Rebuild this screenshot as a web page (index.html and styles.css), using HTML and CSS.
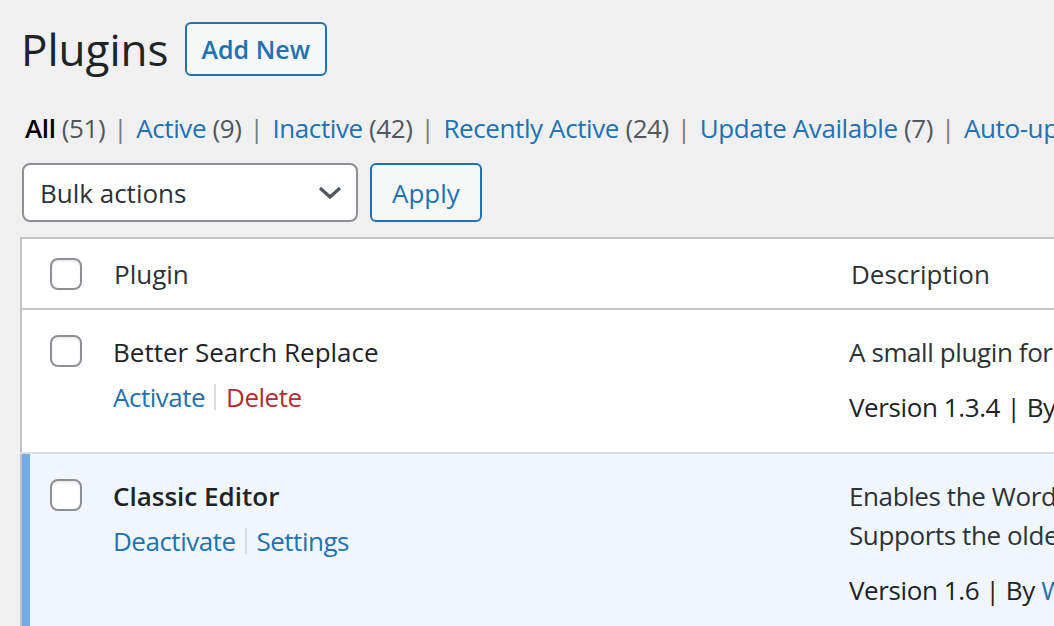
FILE: index.html
```html
<!DOCTYPE html>
<html lang="en">
<head>
    <meta charset="UTF-8">
    <meta name="viewport" content="width=device-width, initial-scale=1.0">
    <title>Plugins</title>
    <link rel="stylesheet" href="styles.css">
</head>
<body>
    <div class="wrap">
        <div class="page-head">
            <h1>Plugins</h1>
            <a class="page-action" href="#">Add New</a>
        </div>

        <ul class="subsubsub">
            <li><a class="current" href="#">All <span class="count">(51)</span></a><span class="sep">|</span></li>
            <li><a href="#">Active <span class="count">(9)</span></a><span class="sep">|</span></li>
            <li><a href="#">Inactive <span class="count">(42)</span></a><span class="sep">|</span></li>
            <li><a href="#">Recently Active <span class="count">(24)</span></a><span class="sep">|</span></li>
            <li><a href="#">Update Available <span class="count">(7)</span></a><span class="sep">|</span></li>
            <li><a href="#">Auto-updates Enabled <span class="count">(3)</span></a></li>
        </ul>

        <div class="tablenav">
            <div class="select">
                <span>Bulk actions</span>
                <svg width="24" height="14" viewBox="0 0 24 14">
                    <polyline points="2,2 12,11 22,2" fill="none" stroke="#50575e" stroke-width="3.2"/>
                </svg>
            </div>
            <button class="button">Apply</button>
        </div>

        <table class="plugins">
            <colgroup>
                <col class="col-check">
                <col class="col-name">
                <col>
            </colgroup>
            <thead>
                <tr>
                    <td class="check-column"><span class="checkbox"></span></td>
                    <th>Plugin</th>
                    <th>Description</th>
                </tr>
            </thead>
            <tbody>
                <tr class="inactive">
                    <td class="check-column"><span class="checkbox"></span></td>
                    <td class="plugin-title">
                        <strong>Better Search Replace</strong>
                        <div class="row-actions">
                            <a href="#">Activate</a><span class="bar"></span><a class="delete" href="#">Delete</a>
                        </div>
                    </td>
                    <td class="plugin-desc">
                        <p>A small plugin for running a search/replace on your WordPress database.</p>
                        <div class="version">Version 1.3.4 | By <a href="#">Delicious Brains</a> | <a href="#">View details</a></div>
                    </td>
                </tr>
                <tr class="active">
                    <td class="check-column"><span class="checkbox"></span></td>
                    <td class="plugin-title">
                        <strong>Classic Editor</strong>
                        <div class="row-actions">
                            <a href="#">Deactivate</a><span class="bar"></span><a href="#">Settings</a>
                        </div>
                    </td>
                    <td class="plugin-desc">
                        <p>Enables the WordPress classic editor and the old-style Edit Post screen with TinyMCE, Meta Boxes, etc.<br>Supports the older plugins that extend this screen.</p>
                        <div class="version">Version 1.6 | By <a href="#">WordPress Contributors</a> | <a href="#">View details</a></div>
                    </td>
                </tr>
            </tbody>
        </table>
    </div>
</body>
</html>
```

FILE: styles.css
```css
body {
    margin: 0;
    background-color: #f0f0f1;
    color: #3c434a;
    font-family: 'Open Sans', 'Noto Sans', sans-serif;
    font-size: 26px;
    overflow: hidden;
}
a {
    color: #2271b1;
    text-decoration: none;
}
.wrap {
    padding: 22px 0 0 20px;
}
.page-head {
    display: flex;
    align-items: center;
    gap: 16px;
}
h1 {
    margin: 0;
    padding-left: 1px;
    font-size: 44px;
    font-weight: 400;
    line-height: 54px;
    color: #1d2327;
}
.page-action {
    height: 50px;
    padding: 0 15px;
    display: flex;
    align-items: center;
    border: 2px solid #2271b1;
    border-radius: 6px;
    background-color: #f6f7f7;
    font-weight: 600;
    font-size: 25px;
}
.subsubsub {
    list-style: none;
    margin: 34px 0 0;
    padding: 0 0 0 5px;
    display: flex;
    white-space: nowrap;
    line-height: 36px;
    letter-spacing: -0.4px;
}
.subsubsub .count {
    color: #50575e;
}
.subsubsub .current {
    color: #000;
    font-weight: 600;
}
.subsubsub .current .count {
    font-weight: 400;
}
.subsubsub .sep {
    color: #787c82;
    margin: 0 9px 0 8px;
}
.tablenav {
    display: flex;
    gap: 12px;
    margin: 17px 0 15px 2px;
}
.select {
    width: 302px;
    height: 55px;
    padding: 0 14px 0 16px;
    display: flex;
    align-items: center;
    justify-content: space-between;
    background-color: #fff;
    border: 2px solid #8c8f94;
    border-radius: 8px;
    color: #2c3338;
}
.button {
    height: 59px;
    padding: 0 20px;
    border: 2px solid #2271b1;
    border-radius: 6px;
    background-color: #f6f7f7;
    color: #2271b1;
    font-family: inherit;
    font-size: 26px;
}
.plugins {
    width: 1400px;
    table-layout: fixed;
    border-collapse: collapse;
    border-top: 2px solid #c3c4c7;
    border-left: 2px solid #c3c4c7;
    background-color: #fff;
}
.col-check {
    width: 92px;
}
.col-name {
    width: 736px;
}
.plugins td,
.plugins th {
    padding: 0;
    text-align: left;
    vertical-align: top;
    white-space: nowrap;
    overflow: hidden;
}
.plugins thead tr {
    height: 71px;
    border-bottom: 2px solid #c3c4c7;
}
.plugins thead th,
.plugins thead td {
    font-weight: 400;
    color: #2c3338;
    vertical-align: middle;
}
.plugins thead th:first-of-type {
    padding-left: 1px;
}
.plugins thead th:last-of-type {
    padding-left: 2px;
}
.plugins .check-column {
    padding-left: 28px;
}
.checkbox {
    display: block;
    width: 28px;
    height: 28px;
    border: 2px solid #8c8f94;
    border-radius: 8px;
    background-color: #fff;
    box-shadow: inset 0 2px 2px rgba(0, 0, 0, 0.08);
}
.plugins tbody tr {
    height: 144px;
    border-bottom: 2px solid #dcdcde;
}
.plugins tbody tr.active {
    height: 200px;
    background-color: #f0f6fc;
}
.plugins tbody .check-column {
    padding-top: 25px;
}
.plugins tbody tr.active .check-column {
    box-shadow: inset 8px 0 0 #72aee6;
}
.plugins .plugin-title {
    padding-top: 24px;
    line-height: 36px;
}
.plugin-title strong {
    display: block;
    color: #1d2327;
    font-weight: 600;
}
.inactive .plugin-title strong {
    font-weight: 400;
}
.row-actions {
    display: flex;
    align-items: center;
    margin-top: 9px;
    letter-spacing: -0.5px;
}
.row-actions .bar {
    width: 2px;
    height: 26px;
    margin: 0 10px 0 9px;
    background-color: #dcdcde;
}
.row-actions .delete {
    color: #b32d2e;
}
.plugins .plugin-desc {
    padding-top: 23px;
    color: #2c3338;
    line-height: 39px;
    letter-spacing: -0.4px;
}
.plugin-desc p {
    margin: 0 0 16px;
}
.version {
    color: #1d2327;
}
```
